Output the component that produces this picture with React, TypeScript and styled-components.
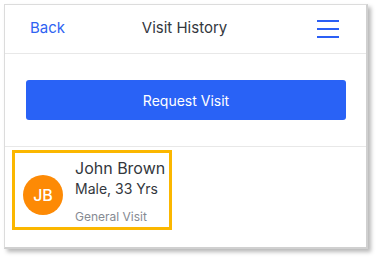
import React from "react";
import styled, { createGlobalStyle } from "styled-components";

const GlobalStyle = createGlobalStyle`
  html, body {
    margin: 0;
    padding: 0;
    background: #ffffff;
  }
  body {
    font-family: "Inter", "Noto Sans", sans-serif;
  }
`;

const SPage = styled.div`
  width: 382px;
  height: 264px;
  padding: 4px 0 0 4px;
  box-sizing: border-box;
`;

const SCard = styled.div`
  width: 364px;
  height: 245px;
  box-sizing: border-box;
  background: #fff;
  border: 1px solid #dcdcdc;
  border-right: 2px solid #d0d0d0;
  border-bottom: 2px solid #d0d0d0;
  box-shadow: 3px 3px 4px rgba(0, 0, 0, 0.28);
  display: flex;
  flex-direction: column;
`;

const SHeader = styled.header`
  height: 49px;
  box-sizing: border-box;
  display: flex;
  align-items: center;
  justify-content: space-between;
  padding: 0 27px 3px 25px;
  border-bottom: 1px solid #e8e8e8;
`;

const SBack = styled.a`
  font-size: 15px;
  color: #2f63f2;
  width: 60px;
`;

const STitle = styled.div`
  font-size: 15px;
  color: #33373d;
`;

const SMenu = styled.div`
  width: 60px;
  display: flex;
  flex-direction: column;
  align-items: flex-end;
  gap: 6px;
  margin-top: 2px;
  span {
    display: block;
    width: 22px;
    height: 2px;
    background: #2b5ff5;
  }
`;

const SAction = styled.div`
  padding: 26px 20px 26px 21px;
  border-bottom: 1px solid #e8e8e8;
`;

const SButton = styled.button`
  width: 100%;
  height: 40px;
  border: none;
  border-radius: 3px;
  background: #2962f6;
  color: #fff;
  font-family: "Inter", sans-serif;
  font-size: 14px;
`;

const SList = styled.div`
  padding: 3px 7px;
`;

const SPatient = styled.div`
  width: 160px;
  height: 80px;
  box-sizing: border-box;
  border: 3px solid #fbb700;
  display: flex;
  align-items: center;
  padding-left: 8px;
  gap: 12px;
`;

const SAvatar = styled.div`
  width: 40px;
  height: 40px;
  border-radius: 50%;
  background: #fd8a05;
  color: #fff;
  font-size: 16px;
  font-weight: 500;
  display: flex;
  align-items: center;
  justify-content: center;
  margin-top: 10px;
`;

const SInfo = styled.div`
  display: flex;
  flex-direction: column;
  margin-top: 2px;
`;

const SName = styled.div`
  font-size: 16px;
  color: #33373d;
  line-height: 20px;
`;

const SMeta = styled.div`
  font-size: 14px;
  color: #33373d;
  line-height: 22px;
`;

const SVisit = styled.div`
  font-size: 12px;
  color: #868a92;
  line-height: 16px;
  margin-top: 9px;
`;

export default function App() {
  return (
    <SPage>
      <GlobalStyle />
      <SCard>
        <SHeader>
          <SBack>Back</SBack>
          <STitle>Visit History</STitle>
          <SMenu>
            <span />
            <span />
            <span />
          </SMenu>
        </SHeader>
        <SAction>
          <SButton>Request Visit</SButton>
        </SAction>
        <SList>
          <SPatient>
            <SAvatar>JB</SAvatar>
            <SInfo>
              <SName>John Brown</SName>
              <SMeta>Male, 33 Yrs</SMeta>
              <SVisit>General Visit</SVisit>
            </SInfo>
          </SPatient>
        </SList>
      </SCard>
    </SPage>
  );
}
